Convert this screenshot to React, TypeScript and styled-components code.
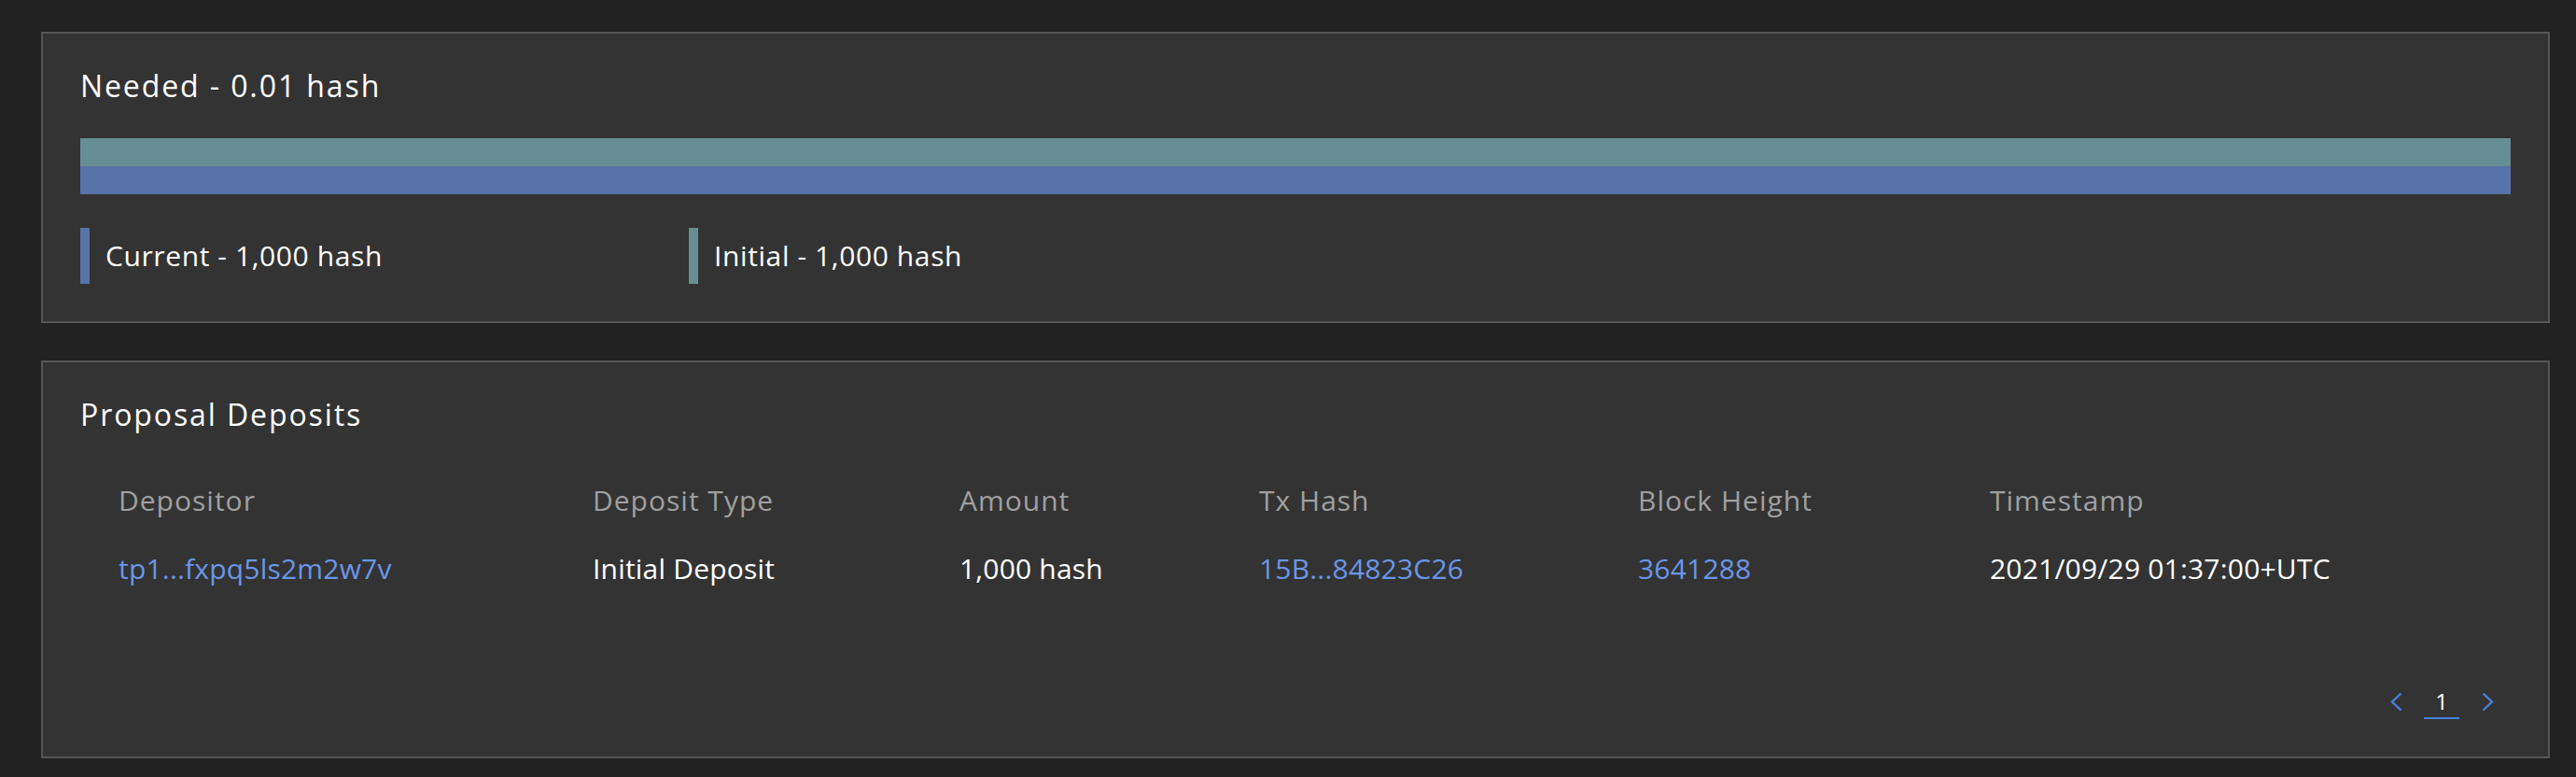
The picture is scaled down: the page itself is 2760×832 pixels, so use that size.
import React from "react"
import styled, { createGlobalStyle } from "styled-components"

const GlobalStyle = createGlobalStyle`
  html, body {
    margin: 0;
    padding: 0;
    background: #222222;
    font-family: "Open Sans", "Liberation Sans", sans-serif;
    color: #ffffff;
  }
`

const Page = styled.div`
  display: flex;
  flex-direction: column;
  gap: 40px;
  padding: 34px 28px 0 44px;
`

const Card = styled.section`
  background: #333333;
  border: 2px solid #555555;
  padding: 40px;
  display: flex;
  flex-direction: column;
`

const Title = styled.h2`
  margin: 0;
  font-size: 32px;
  line-height: 32px;
  font-weight: 400;
  letter-spacing: 1.9px;
  color: #ffffff;
`

const Bar = styled.div`
  margin-top: 40px;
  display: flex;
  flex-direction: column;
`

const BarPart = styled.div<{ $color: string }>`
  height: 30px;
  background: ${(p) => p.$color};
`

const Legend = styled.div`
  margin-top: 36px;
  display: flex;
`

const LegendItem = styled.div`
  width: 652px;
  height: 60px;
  display: flex;
  align-items: center;
  gap: 17px;
`

const Marker = styled.span<{ $color: string }>`
  width: 10px;
  align-self: stretch;
  background: ${(p) => p.$color};
`

const LegendText = styled.span`
  font-size: 30px;
  line-height: 30px;
  letter-spacing: 0.6px;
`

const Table = styled.div`
  margin-top: 41px;
  display: grid;
  grid-template-columns: 508px 393px 321px 406px 377px 1fr;
`

const HeadCell = styled.div`
  padding: 20px 0 20px 41px;
  font-size: 30px;
  line-height: 30px;
  letter-spacing: 1px;
  color: #a0a0a0;
  white-space: nowrap;
`

const Cell = styled.div<{ $link?: boolean }>`
  padding: 23px 0 23px 41px;
  font-size: 30px;
  line-height: 30px;
  letter-spacing: 0.2px;
  color: ${(p) => (p.$link ? "#6b96e8" : "#ffffff")};
  white-space: nowrap;
`

const Pagination = styled.div`
  margin-top: 85px;
  display: flex;
  justify-content: flex-end;
  align-items: stretch;
  height: 38px;
`

const PageButton = styled.button`
  width: 50px;
  padding: 0;
  border: none;
  background: transparent;
  display: flex;
  align-items: center;
  justify-content: center;
  cursor: pointer;
`

const PageNumber = styled.span`
  width: 38px;
  margin: 0 5px;
  display: flex;
  align-items: center;
  justify-content: center;
  border-bottom: 2px solid #4a80e0;
  font-size: 24px;
  color: #ffffff;
`

const Chevron = ({ dir }: { dir: "left" | "right" }) => (
  <svg width="13" height="21" viewBox="0 0 13 21" fill="none">
    <path
      d={dir === "left" ? "M11.5 1.5 L2 10.5 L11.5 19.5" : "M1.5 1.5 L11 10.5 L1.5 19.5"}
      stroke="#4a80e0"
      strokeWidth="2.4"
    />
  </svg>
)

const columns = ["Depositor", "Deposit Type", "Amount", "Tx Hash", "Block Height", "Timestamp"]

const deposits = [
  {
    depositor: "tp1...fxpq5ls2m2w7v",
    type: "Initial Deposit",
    amount: "1,000 hash",
    tx: "15B...84823C26",
    height: "3641288",
    time: "2021/09/29 01:37:00+UTC",
  },
]

export default function App() {
  return (
    <>
      <GlobalStyle />
      <Page>
        <Card>
          <Title>Needed - 0.01 hash</Title>
          <Bar>
            <BarPart $color="#678e94" />
            <BarPart $color="#5873a8" />
          </Bar>
          <Legend>
            <LegendItem>
              <Marker $color="#5873a8" />
              <LegendText>Current - 1,000 hash</LegendText>
            </LegendItem>
            <LegendItem>
              <Marker $color="#678e94" />
              <LegendText>Initial - 1,000 hash</LegendText>
            </LegendItem>
          </Legend>
        </Card>

        <Card>
          <Title>Proposal Deposits</Title>
          <Table>
            {columns.map((c) => (
              <HeadCell key={c}>{c}</HeadCell>
            ))}
            {deposits.map((d) => (
              <React.Fragment key={d.tx}>
                <Cell $link>{d.depositor}</Cell>
                <Cell>{d.type}</Cell>
                <Cell>{d.amount}</Cell>
                <Cell $link>{d.tx}</Cell>
                <Cell $link>{d.height}</Cell>
                <Cell>{d.time}</Cell>
              </React.Fragment>
            ))}
          </Table>
          <Pagination>
            <PageButton>
              <Chevron dir="left" />
            </PageButton>
            <PageNumber>1</PageNumber>
            <PageButton>
              <Chevron dir="right" />
            </PageButton>
          </Pagination>
        </Card>
      </Page>
    </>
  )
}
